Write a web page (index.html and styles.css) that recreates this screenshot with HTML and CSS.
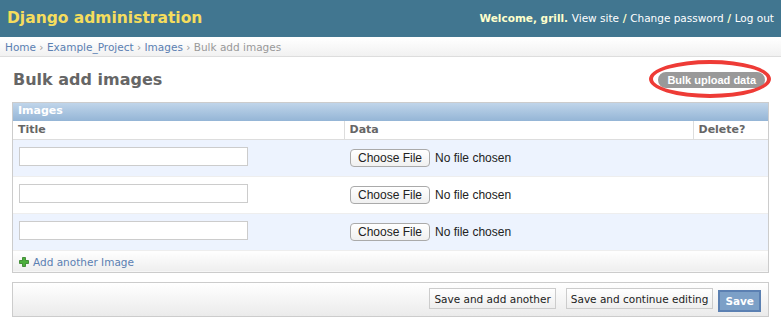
FILE: index.html
```html
<!DOCTYPE html>
<html>
<head>
<meta charset="utf-8">
<link rel="stylesheet" href="styles.css">
</head>
<body>
<div class="header">
  <div class="branding">Django administration</div>
  <div class="user-tools">Welcome, <strong>grill</strong>. <a href="#">View site</a> / <a href="#">Change password</a> / <a href="#">Log out</a></div>
</div>
<div class="breadcrumbs"><a href="#">Home</a> › <a href="#">Example_Project</a> › <a href="#">Images</a> › Bulk add images</div>
<div class="content">
  <div class="title-row">
    <h1>Bulk add images</h1>
    <div class="tools">
      <a class="pill" href="#">Bulk upload data</a>
      <span class="ring"></span>
    </div>
  </div>
  <div class="module">
    <h2>Images</h2>
    <table>
      <thead>
        <tr><th class="c-title">Title</th><th class="c-data">Data</th><th class="c-del">Delete?</th></tr>
      </thead>
      <tbody>
        <tr class="row1"><td><input type="text" class="txt"></td><td><span class="file"><span class="choose">Choose File</span>No file chosen</span></td><td></td></tr>
        <tr class="row2"><td><input type="text" class="txt"></td><td><span class="file"><span class="choose">Choose File</span>No file chosen</span></td><td></td></tr>
        <tr class="row1"><td><input type="text" class="txt"></td><td><span class="file"><span class="choose">Choose File</span>No file chosen</span></td><td></td></tr>
        <tr class="add-row"><td colspan="3"><svg class="plus" width="10" height="10" viewBox="0 0 10 10"><path d="M3.5 0.5h3v3h3v3h-3v3h-3v-3h-3v-3h3z" fill="#4caf3c" stroke="#2f7d22" stroke-width="0.8"/></svg><a href="#">Add another Image</a></td></tr>
      </tbody>
    </table>
  </div>
  <div class="submit-row">
    <button class="btn">Save and add another</button>
    <button class="btn">Save and continue editing</button>
    <button class="btn default">Save</button>
  </div>
</div>
</body>
</html>
```
FILE: styles.css
```css
* { box-sizing: border-box; }
body {
  margin: 0;
  font-family: "DejaVu Sans", Verdana, sans-serif;
  font-size: 11px;
  color: #333;
  background: #fff;
}
a { text-decoration: none; }
.header {
  background: #417690;
  height: 37px;
  display: flex;
  align-items: center;
  justify-content: space-between;
  padding: 0 7px 0 7px;
}
.branding {
  color: #f5dd5d;
  font-size: 15.5px;
  font-weight: bold;
  margin-top: -2px;
}
.user-tools {
  color: #ffc;
  font-size: 10.5px;
  font-weight: bold;
  margin-top: -2px;
}
.user-tools strong { color: #ffc; }
.user-tools a { color: #fff; font-weight: normal; }
.breadcrumbs {
  height: 20px;
  background: linear-gradient(#fff, #f1f1f1);
  border-bottom: 1px solid #ddd;
  border-top: 1px solid #fff;
  padding: 3px 5px 0;
  color: #999;
  font-size: 10.5px;
}
.breadcrumbs a { color: #5b80b2; }
.content { padding: 0 12px 0 12px; }
.title-row {
  display: flex;
  justify-content: space-between;
  align-items: center;
  height: 45px;
}
h1 {
  margin: 0 0 0 1px;
  font-size: 16px;
  font-weight: bold;
  color: #666;
}
.tools { position: relative; margin-right: 4px; margin-top: 0px; }
.pill {
  display: block;
  background: #999;
  color: #fff;
  font-weight: bold;
  padding: 2px 9px 2px;
  border-radius: 9px;
  font-family: "Liberation Sans", Arial, sans-serif;
  font-size: 11px;
}
.ring {
  position: absolute;
  left: -9px;
  right: -6px;
  top: -12px;
  bottom: -10px;
  border: 4px solid #ee3b36;
  border-radius: 50%;
}
.module {
  border: 1px solid #ccc;
}
.module h2 {
  margin: 0;
  height: 18px;
  background: linear-gradient(#c0d5ea, #94b5d6);
  color: #fff;
  font-size: 11px;
  font-weight: bold;
  padding: 1px 5px;
}
table { width: 100%; border-collapse: collapse; }
th {
  text-align: left;
  font-size: 11px;
  font-weight: bold;
  color: #666;
  height: 18px;
  padding: 0 5px;
  border-bottom: 1px solid #ddd;
  background: #fff;
}
th.c-data, th.c-del { border-left: 1px solid #ddd; }
th.c-title { width: 331px; }
th.c-del { width: 75px; }
td {
  height: 37px;
  padding: 0 5px;
  border-bottom: 1px solid #eee;
  vertical-align: middle;
}
.row1 td { background: #edf3fe; }
.row2 td { background: #fff; }
.txt {
  display: block;
  width: 229px;
  height: 19px;
  border: 1px solid #ccc;
  margin: 0 0 3px 1px;
  background: #fff;
}
.file {
  display: flex;
  align-items: center;
  font-family: "Liberation Sans", Arial, sans-serif;
  font-size: 12px;
  color: #222;
  margin-left: 1px;
}
.choose {
  display: inline-block;
  height: 18px;
  line-height: 16px;
  padding: 0 7px;
  border: 1px solid #aaa;
  border-radius: 4px;
  background: linear-gradient(#fff, #f0f0f0);
  margin-right: 5px;
}
.add-row td {
  height: 22px;
  background: linear-gradient(#fff, #eee);
  border-bottom: none;
  padding: 2px 5px 0;
}
.add-row a { color: #5b80b2; font-size: 10.5px; }
.plus { margin: 0 4px 0 1px; vertical-align: -1px; }
.submit-row {
  margin-top: 9px;
  border: 1px solid #ccc;
  height: 35px;
  background: linear-gradient(#fff, #ebebeb);
  display: flex;
  justify-content: flex-end;
  align-items: center;
  gap: 10px;
  padding-right: 7px;
}
.btn {
  font-family: "DejaVu Sans", Verdana, sans-serif;
  font-size: 10.5px;
  color: #222;
  background: linear-gradient(#fff, #eee);
  border: 1px solid #ccc;
  height: 21px;
  padding: 0 4px;
  margin-top: -2px;
}
.btn.default {
  background: #7ca0c7;
  border: 2px solid #5b80b2;
  color: #fff;
  font-weight: bold;
  margin-left: -5px;
  padding: 0 5px;
  height: 22px;
  margin-top: 2px;
}
```
